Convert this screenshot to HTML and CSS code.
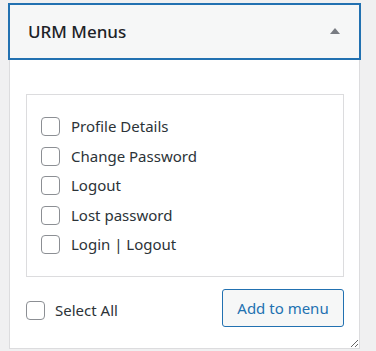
FILE: index.html
```html
<!DOCTYPE html>
<html>
<head>
<meta charset="utf-8">
<link rel="stylesheet" href="styles.css">
</head>
<body>
<div class="panel">
  <div class="panel-header">
    <h3 class="panel-title">URM Menus</h3>
    <span class="toggle-arrow"></span>
  </div>
  <div class="panel-body">
    <ul class="menu-list">
      <li class="menu-item"><input type="checkbox" class="check"><span class="item-label">Profile Details</span></li>
      <li class="menu-item"><input type="checkbox" class="check"><span class="item-label">Change Password</span></li>
      <li class="menu-item"><input type="checkbox" class="check"><span class="item-label">Logout</span></li>
      <li class="menu-item"><input type="checkbox" class="check"><span class="item-label">Lost password</span></li>
      <li class="menu-item"><input type="checkbox" class="check"><span class="item-label">Login | Logout</span></li>
    </ul>
    <div class="panel-footer">
      <label class="select-all"><input type="checkbox" class="check"><span class="item-label">Select All</span></label>
      <button class="add-button">Add to menu</button>
    </div>
  </div>
</div>
</body>
</html>
```

FILE: styles.css
```css
* { box-sizing: border-box; }
html, body { margin: 0; padding: 0; }
body {
  background: #f0f0f1;
  font-family: "Noto Sans", "Open Sans", sans-serif;
  color: #2c3338;
  padding: 4px 0 0 9px;
}
.panel {
  width: 351px;
  background: #fff;
  border: 1px solid #dcdcde;
}
.panel-header {
  margin: -1px -1px 0 -1px;
  height: 55px;
  background: #f6f7f7;
  border: 1px solid #2271b1;
  box-shadow: 0 0 0 1px #2271b1;
  display: flex;
  align-items: center;
  justify-content: space-between;
  padding: 0 19px 0 18px;
}
.panel-title {
  margin: 0;
  font-size: 17px;
  font-weight: 500;
  color: #1d2327;
}
.toggle-arrow {
  width: 0;
  height: 0;
  border-left: 5px solid transparent;
  border-right: 5px solid transparent;
  border-bottom: 6px solid #787c82;
  margin-top: -1px;
}
.panel-body {
  padding: 35px 15px 21px 16px;
  resize: vertical;
  overflow: hidden;
}
.menu-list {
  list-style: none;
  margin: 0;
  padding: 22px 14px;
  border: 1px solid #dcdcde;
  display: flex;
  flex-direction: column;
  gap: 10.5px;
}
.menu-item {
  display: flex;
  align-items: center;
  height: 19px;
}
.check {
  appearance: none;
  -webkit-appearance: none;
  margin: 0;
  width: 19px;
  height: 19px;
  border: 1px solid #8c8f94;
  border-radius: 4px;
  background: #fff;
  flex: none;
}
.item-label {
  margin-left: 11px;
  font-size: 15px;
  line-height: 19px;
}
.panel-footer {
  margin-top: 12px;
  display: flex;
  align-items: center;
  justify-content: space-between;
}
.select-all {
  display: flex;
  align-items: center;
  margin-top: 4px;
}
.select-all .item-label { margin-left: 10px; }
.add-button {
  height: 38px;
  padding: 0 14px;
  width: 122px;
  background: #f6f7f7;
  border: 1px solid #2271b1;
  border-radius: 3px;
  color: #2271b1;
  font-family: "Noto Sans", "Open Sans", sans-serif;
  font-size: 15px;
}
```
